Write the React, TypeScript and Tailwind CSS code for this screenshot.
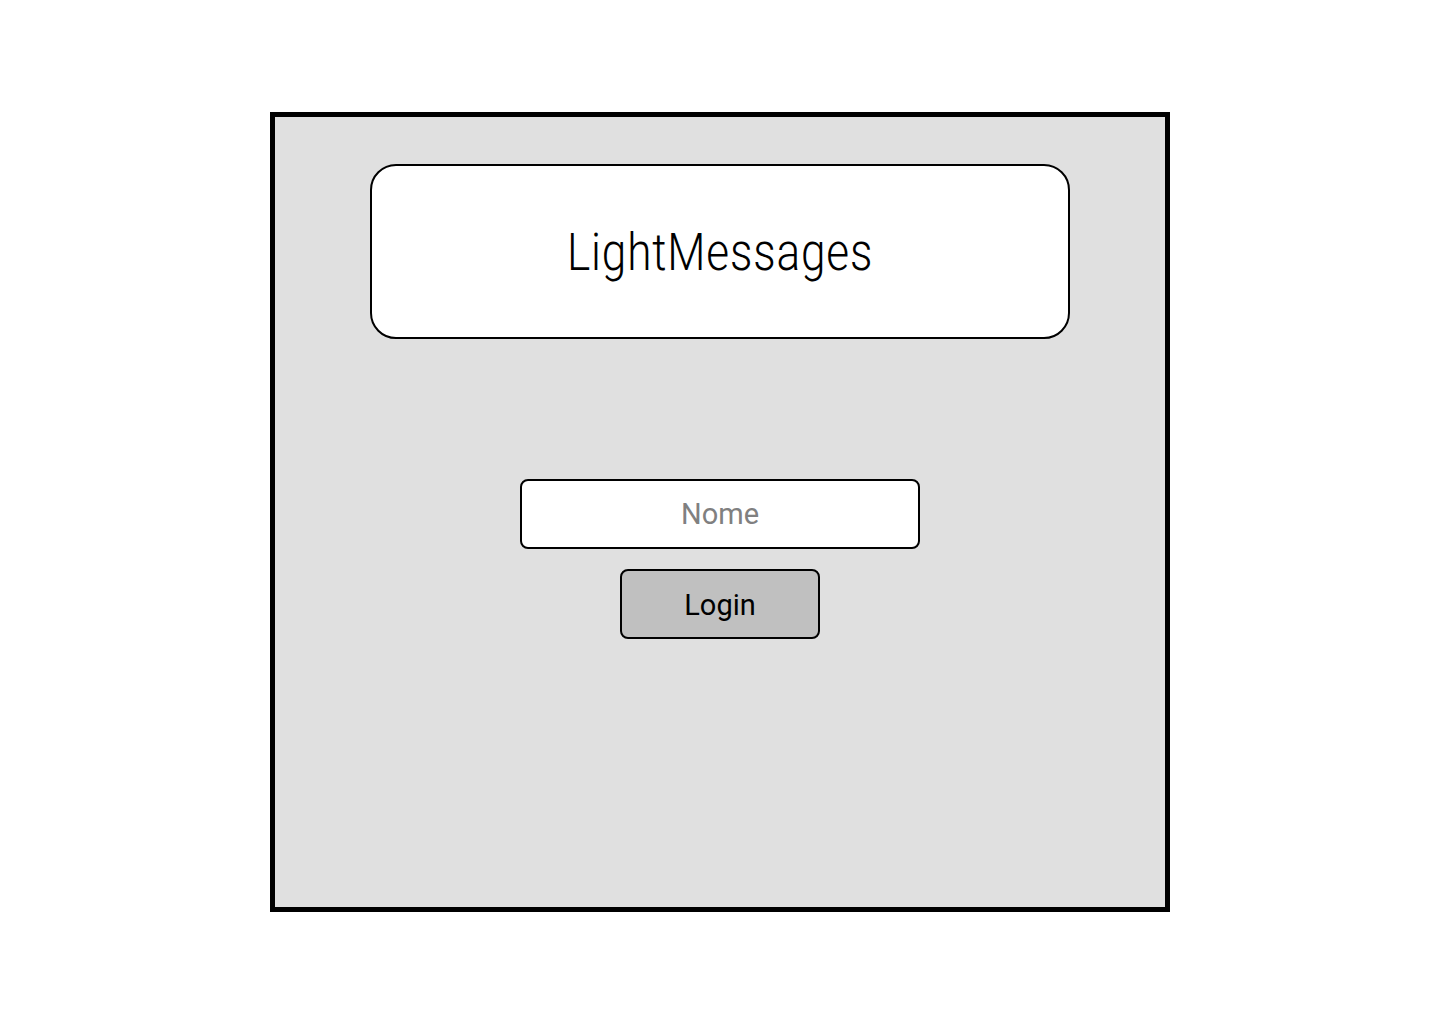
import React from "react";

export default function App() {
  return (
    <div className="w-[1440px] h-[1024px] bg-white pt-[112px]" style={{ fontFamily: "Roboto, 'Liberation Sans', sans-serif" }}>
      <div className="mx-auto w-[900px] h-[800px] border-[5px] border-black bg-[#e0e0e0] flex flex-col items-center pt-[47px]">
        <div className="w-[700px] h-[175px] bg-white border-2 border-black rounded-[26px] flex items-center justify-center">
          <span className="inline-block scale-x-[0.865] text-[51px] font-light text-black tracking-[1px] leading-none mt-[2px]">
            LightMessages
          </span>
        </div>
        <div className="mt-[140px] w-[400px] h-[70px] bg-white border-2 border-black rounded-[8px] flex items-center justify-center">
          <span className="text-[29px] text-[#808080] mt-[2px]">Nome</span>
        </div>
        <div className="mt-[20px] w-[200px] h-[70px] bg-[#c0c0c0] border-2 border-black rounded-[8px] flex items-center justify-center">
          <span className="text-[29px] text-black mt-[3px]">Login</span>
        </div>
      </div>
    </div>
  );
}
